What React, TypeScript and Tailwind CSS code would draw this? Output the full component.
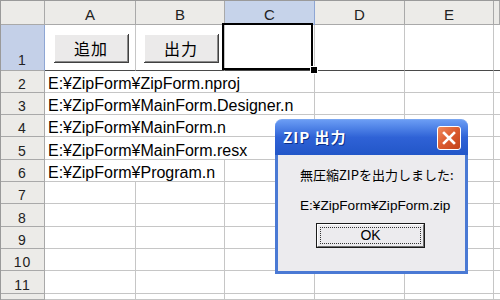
import React from "react";

const FONT = "font-['Liberation_Sans','Noto_Sans_CJK_JP',sans-serif]";
const JP = "font-['Noto_Sans_CJK_JP','Liberation_Sans',sans-serif]";

const texts: Record<number, { t: string; span: number }> = {
  2: { t: "E:¥ZipForm¥ZipForm.nproj", span: 3 },
  3: { t: "E:¥ZipForm¥MainForm.Designer.n", span: 3 },
  4: { t: "E:¥ZipForm¥MainForm.n", span: 3 },
  5: { t: "E:¥ZipForm¥MainForm.resx", span: 3 },
  6: { t: "E:¥ZipForm¥Program.n", span: 2 },
};

const cell = "border-r border-b border-[#c6c6c6]";
const hdr =
  "bg-[#ecebe8] border-r border-b border-[#a9a9a9] flex items-end justify-center text-[15px] text-[#222] leading-none";

function XlButton({ label }: { label: string }) {
  return (
    <div className="w-[75px] h-[29px] bg-[#404040] pr-[1px] pb-[1px]">
      <div className="w-full h-full bg-[#8a8a8a] border-t border-l border-white pr-[1px] pb-[1px]">
        <div
          className={`w-full h-full bg-[#ebeaea] flex items-center justify-center text-[16px] tracking-[1px] text-black ${JP}`}
        >
          {label}
        </div>
      </div>
    </div>
  );
}

function Dialog() {
  return (
    <div className="absolute left-[275px] top-[119px] w-[193px] h-[155px] flex flex-col">
      <div className="h-[36px] rounded-t-[7px] bg-gradient-to-b from-[#6a9cf4] via-[#2f62d6] to-[#2256c8] flex items-center pl-[8px] pr-[7px] border-t border-[#7aa6f0]">
        <span
          className={`text-white font-bold text-[15px] tracking-[1px] flex-1 [text-shadow:1px_1px_0_#0b2f8a] ${JP}`}
        >
          ZIP 出力
        </span>
        <div className="w-[24px] h-[24px] rounded-[3px] border border-white bg-gradient-to-br from-[#f08a5e] via-[#db5a2e] to-[#c2421a] flex items-center justify-center">
          <svg width="14" height="14" viewBox="0 0 14 14">
            <path d="M2 2 L12 12 M12 2 L2 12" stroke="white" strokeWidth="2.6" strokeLinecap="square" />
          </svg>
        </div>
      </div>
      <div className="flex-1 bg-[#4a79d4] px-[3px] pb-[3px]">
        <div className="w-full h-full bg-[#ecebee] flex flex-col pl-[22px]">
          <div className={`text-[13px] text-black mt-[12px] leading-[16px] ${JP}`}>
            無圧縮ZIPを出力しました:
          </div>
          <div className={`text-[13.6px] text-black mt-[15px] leading-[16px] ${FONT}`}>
            E:¥ZipForm¥ZipForm.zip
          </div>
          <div className="ml-[16px] mt-[9px] w-[109px] h-[25px] border border-[#1a1a1a] bg-[#ecebee]">
            <div className="w-full h-full border-t border-l border-white border-r border-b border-r-[#707070] border-b-[#707070] p-[2px]">
              <div
                className={`w-full h-full border border-dotted border-[#333] flex items-center justify-center text-[14px] text-black ${FONT}`}
              >
                OK
              </div>
            </div>
          </div>
        </div>
      </div>
    </div>
  );
}

export default function App() {
  const colHeads = ["A", "B", "C", "D", "E", ""];
  return (
    <div className={`relative w-[500px] h-[300px] overflow-hidden bg-white ${FONT}`}>
      <div className="grid grid-cols-[44px_91px_89px_90px_90px_89px_1fr] grid-rows-[24px_46px_22px_22px_22px_23px_22px_22px_23px_22px_22px_23px_1fr] h-[300px] border-t border-l border-[#9a9a9a]">
        {/* header row */}
        <div className={hdr}></div>
        {colHeads.map((h, i) => (
          <div
            key={i}
            className={
              i === 2
                ? "bg-[#c6d3ea] border-r border-b border-[#8ea6d4] flex items-end justify-center text-[15px] text-[#222] leading-none pb-[2px]"
                : `${hdr} pb-[2px]`
            }
          >
            {h}
          </div>
        ))}

        {/* row 1 */}
        <div className="bg-[#c4d0e8] border-r border-b border-r-[#8ea6d4] border-b-[#a9a9a9] flex items-end justify-center text-[14px] tracking-[1px] text-[#222] leading-none pb-[3px]">
          1
        </div>
        <div className="border-r border-b border-r-[#c6c6c6] border-b-[#4a4a4a] pl-[9px] pt-[9px]">
          <XlButton label="追加" />
        </div>
        <div className="border-r border-b border-r-[#c6c6c6] border-b-[#4a4a4a] pl-[8px] pt-[9px]">
          <XlButton label="出力" />
        </div>
        <div className="border-r border-b border-r-[#c6c6c6] border-b-[#4a4a4a]"></div>
        <div className="border-r border-b border-r-[#c6c6c6] border-b-[#4a4a4a]"></div>
        <div className="border-r border-b border-r-[#c6c6c6] border-b-[#4a4a4a]"></div>
        <div className="border-b border-b-[#4a4a4a]"></div>

        {/* rows 2..12 */}
        {[2, 3, 4, 5, 6, 7, 8, 9, 10, 11, 12].map((r) => {
          const tx = texts[r];
          const cells: React.ReactNode[] = [];
          cells.push(
            <div
              key={`h${r}`}
              className="bg-[#ecebe8] border-r border-b border-[#a9a9a9] flex items-end justify-center text-[14px] tracking-[1px] text-[#222] leading-none pb-[1px]"
            >
              {r <= 11 ? r : ""}
            </div>
          );
          let start = 0;
          if (tx) {
            cells.push(
              <div
                key={`t${r}`}
                className={`${cell} ${tx.span === 2 ? "col-span-2" : "col-span-3"} flex items-end pl-[3px] text-[16px] leading-none text-black whitespace-nowrap overflow-visible`}
              >
                {tx.t}
              </div>
            );
            start = tx.span;
          }
          for (let c = start; c < 6; c++) {
            cells.push(<div key={`c${r}-${c}`} className={c === 5 ? "border-b border-[#c6c6c6]" : cell}></div>);
          }
          return cells;
        })}
      </div>

      {/* selection */}
      <div className="absolute left-[222px] top-[23px] w-[91px] h-[47px] border-2 border-black pointer-events-none"></div>
      <div className="absolute left-[310px] top-[66px] w-[6px] h-[6px] bg-black border border-white box-content"></div>

      <Dialog />
    </div>
  );
}
